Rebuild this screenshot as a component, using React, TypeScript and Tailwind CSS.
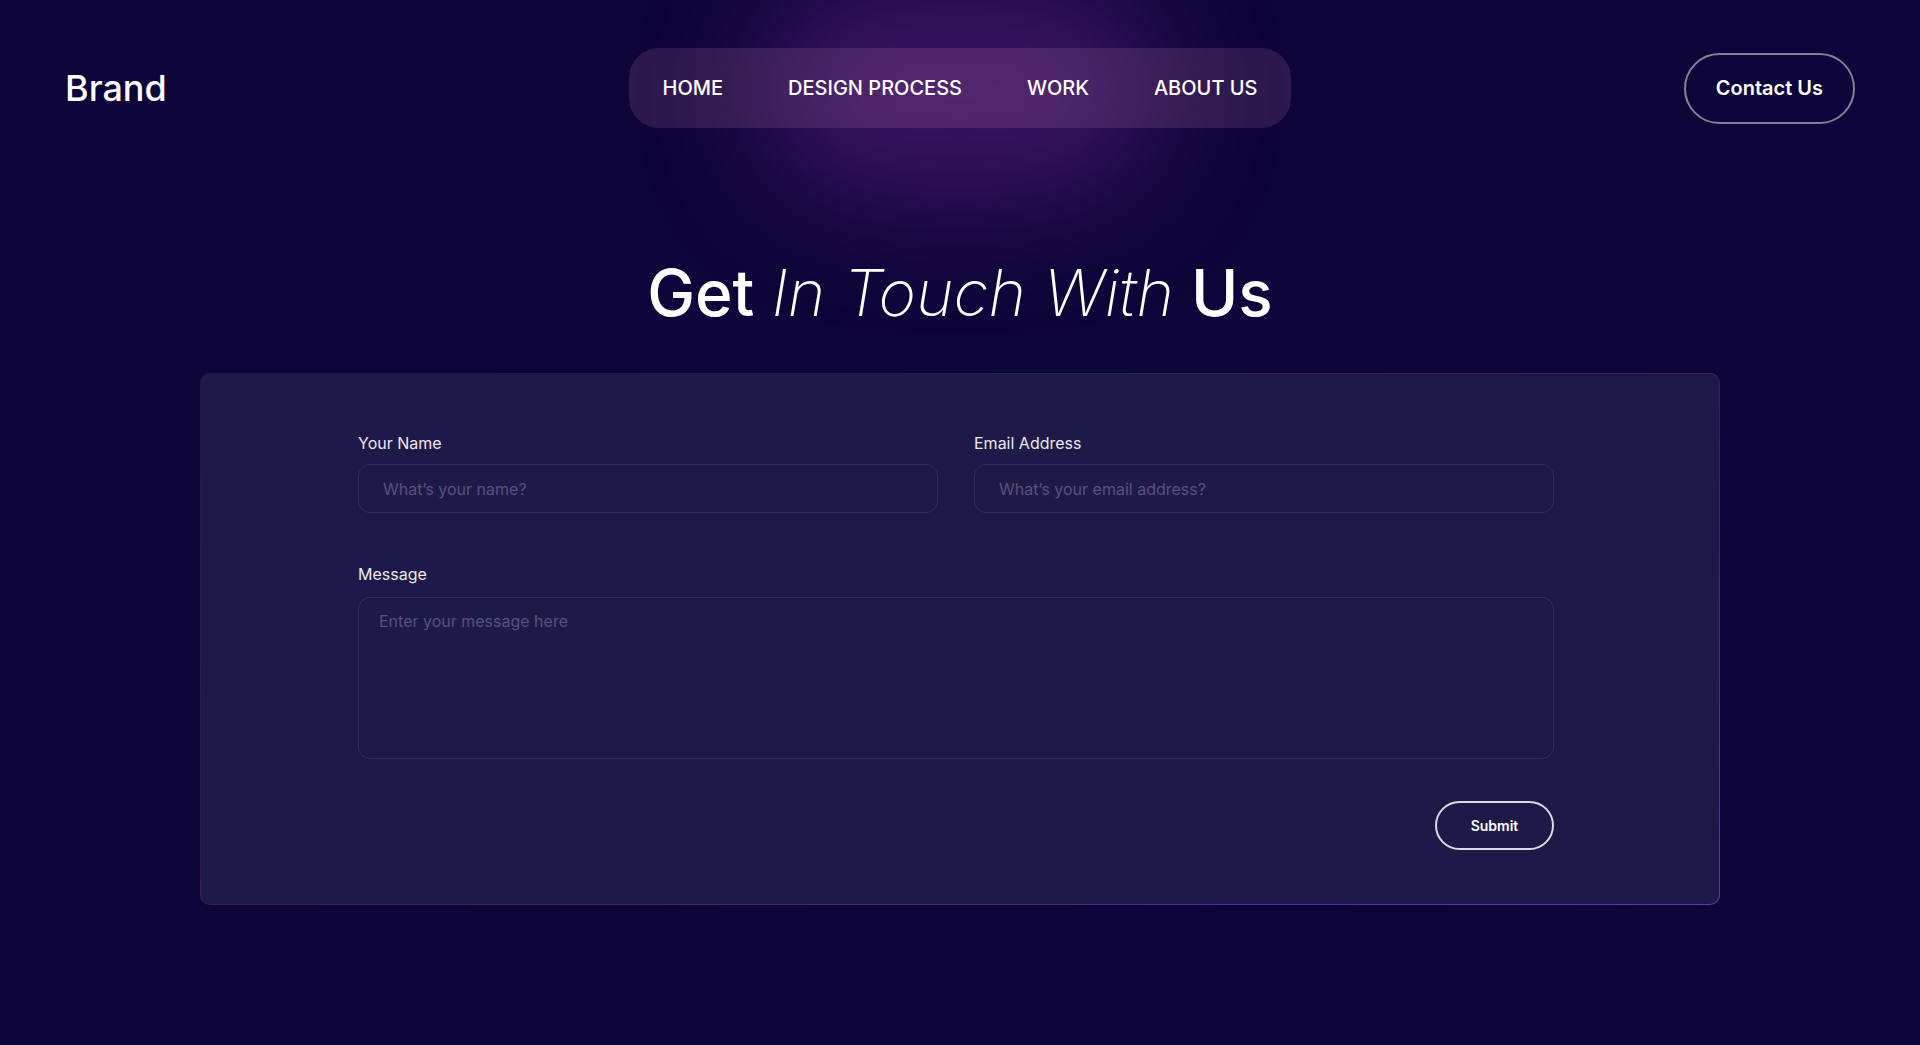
import { useState } from "react";

const navLinks = ["HOME", "DESIGN PROCESS", "WORK", "ABOUT US"];

function Header() {
  return (
    <header className="relative grid grid-cols-[1fr_auto_1fr] items-center px-[65px] pt-12">
      <a href="#" className="text-4xl font-medium leading-none text-white">
        Brand
      </a>
      <nav className="flex h-20 items-center gap-[65px] rounded-[30px] bg-[#b070a0]/20 px-[33px]">
        {navLinks.map((link) => (
          <a key={link} href="#" className="text-xl font-medium leading-7 text-white">
            {link}
          </a>
        ))}
      </nav>
      <div className="flex justify-end">
        <button className="flex h-[71px] items-center rounded-full border-2 border-[#85819a] px-[30px] text-xl font-semibold text-white">
          Contact Us
        </button>
      </div>
    </header>
  );
}

function Field({
  label,
  placeholder,
  value,
  onChange,
}: {
  label: string;
  placeholder: string;
  value: string;
  onChange: (v: string) => void;
}) {
  return (
    <label className="flex flex-col">
      <span className="mb-[9px] text-base leading-6 text-[#ebe9f3]">{label}</span>
      <input
        value={value}
        onChange={(e) => onChange(e.target.value)}
        placeholder={placeholder}
        className="h-[49px] rounded-xl border border-[#342e5f] bg-transparent px-6 text-base text-white outline-none placeholder:text-[#57527e]"
      />
    </label>
  );
}

function ContactForm() {
  const [name, setName] = useState("");
  const [email, setEmail] = useState("");
  const [message, setMessage] = useState("");

  return (
    <div className="rounded-[10px] bg-gradient-to-br from-[#1f1947] via-[#3a1d52] to-[#6333b0] p-px">
      <form
        onSubmit={(e) => e.preventDefault()}
        className="rounded-[9px] bg-[#1f1947] pb-[54px] pl-[157px] pr-[165px] pt-[57px]"
      >
        <div className="grid grid-cols-2 gap-9">
          <Field label="Your Name" placeholder="What’s your name?" value={name} onChange={setName} />
          <Field
            label="Email Address"
            placeholder="What’s your email address?"
            value={email}
            onChange={setEmail}
          />
        </div>
        <label className="mt-[49px] flex flex-col">
          <span className="mb-[11px] text-base leading-6 text-[#ebe9f3]">Message</span>
          <textarea
            value={message}
            onChange={(e) => setMessage(e.target.value)}
            placeholder="Enter your message here"
            className="h-[162px] resize-none rounded-xl border border-[#342e5f] bg-transparent px-5 py-[11px] text-base text-white outline-none placeholder:text-[#57527e]"
          />
        </label>
        <div className="mt-[42px] flex justify-end">
          <button
            type="submit"
            className="h-[49px] w-[119px] rounded-full border-2 border-[#dcdae6] text-sm font-semibold text-white"
          >
            Submit
          </button>
        </div>
      </form>
    </div>
  );
}

export default function App() {
  return (
    <div className="relative min-h-screen overflow-hidden bg-[#0d0439] font-['Inter',sans-serif]">
      {/* glow behind the nav */}
      <div className="pointer-events-none absolute left-1/2 top-[-20px] h-[220px] w-[400px] -translate-x-1/2 rounded-full bg-[#4f1c72] opacity-70 blur-[60px]" />

      <Header />

      <main className="relative px-[200px] pb-24">
        <h1 className="mt-[133px] text-center text-[64px] leading-none text-white">
          <span className="font-medium">Get </span>
          <span className="font-extralight italic">In Touch With</span>
          <span className="font-medium"> Us</span>
        </h1>
        <div className="mt-12">
          <ContactForm />
        </div>
      </main>
    </div>
  );
}
